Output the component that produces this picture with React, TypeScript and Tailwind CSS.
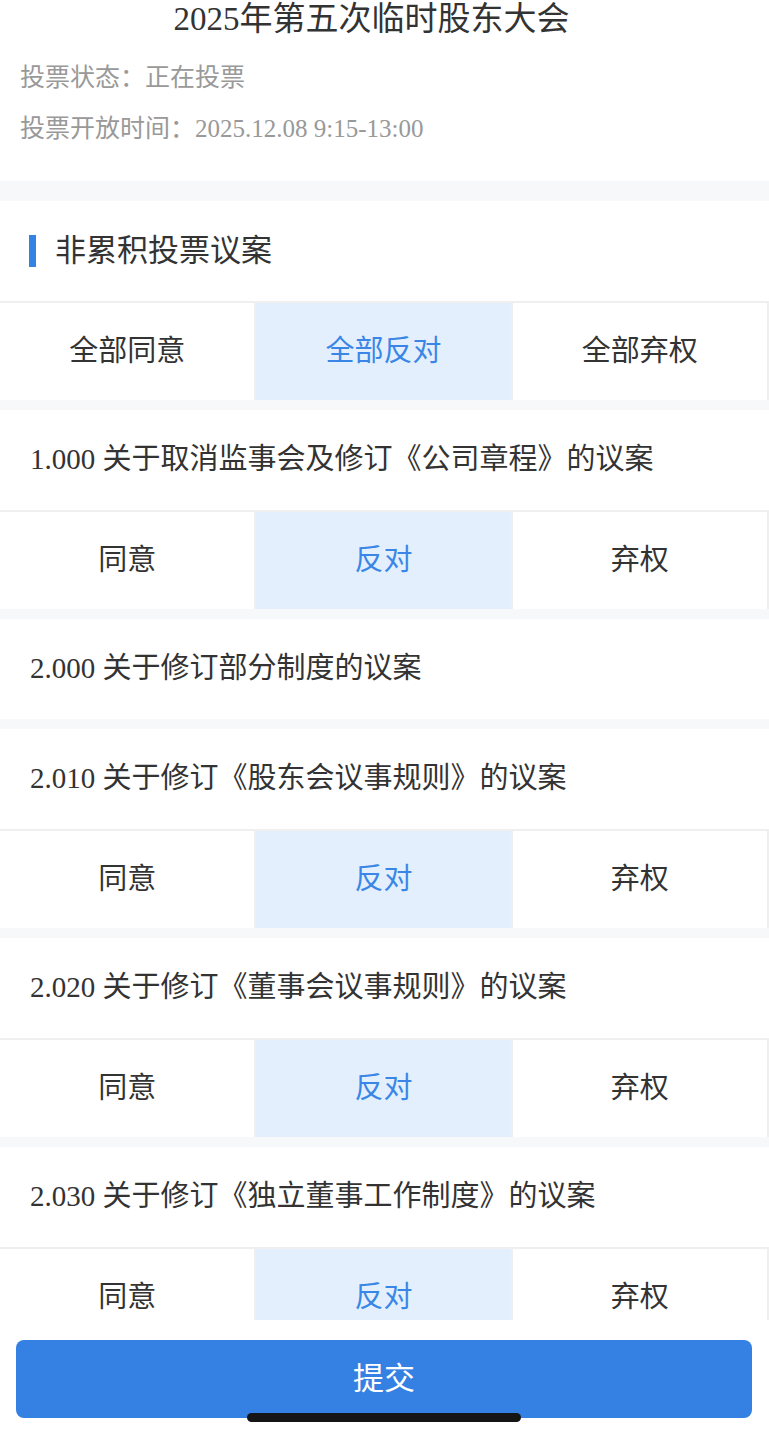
import React, { useState } from 'react';

type Choice = 'agree' | 'against' | 'abstain';

interface Motion {
  code: string;
  title: string;
  votable: boolean;
}

const MOTIONS: Motion[] = [
  { code: '1.000', title: '关于取消监事会及修订《公司章程》的议案', votable: true },
  { code: '2.000', title: '关于修订部分制度的议案', votable: false },
  { code: '2.010', title: '关于修订《股东会议事规则》的议案', votable: true },
  { code: '2.020', title: '关于修订《董事会议事规则》的议案', votable: true },
  { code: '2.030', title: '关于修订《独立董事工作制度》的议案', votable: true },
];

const FONT = "font-['Liberation_Serif','Noto_Sans_CJK_SC',sans-serif]";

function ChoiceRow({
  labels,
  value,
  onChange,
}: {
  labels: [string, string, string];
  value: Choice;
  onChange: (c: Choice) => void;
}) {
  const keys: Choice[] = ['agree', 'against', 'abstain'];
  return (
    <div className="grid grid-cols-3 border-t-2 border-[#efefef] bg-white">
      {keys.map((k, i) => {
        const active = value === k;
        return (
          <button
            key={k}
            onClick={() => onChange(k)}
            className={`h-[97px] border-r-2 border-[#efefef] text-[29px] flex items-center justify-center ${
              active ? 'bg-[#e3effd] text-[#3a86e6]' : 'bg-white text-[#333]'
            }`}
          >
            {labels[i]}
          </button>
        );
      })}
    </div>
  );
}

export default function App() {
  const [votes, setVotes] = useState<Record<string, Choice>>(() => {
    const v: Record<string, Choice> = {};
    MOTIONS.forEach((m) => (v[m.code] = 'against'));
    return v;
  });

  const allValue: Choice | null = (() => {
    const vals = MOTIONS.filter((m) => m.votable).map((m) => votes[m.code]);
    return vals.every((x) => x === vals[0]) ? vals[0] : null;
  })();

  const setAll = (c: Choice) => {
    const v: Record<string, Choice> = {};
    MOTIONS.forEach((m) => (v[m.code] = c));
    setVotes(v);
  };

  return (
    <div className={`relative h-[1439px] w-full flex flex-col bg-white overflow-hidden ${FONT}`}>
      <div className="flex-1 overflow-hidden bg-[#f7f8fa]">
        {/* Meeting info */}
        <div className="bg-white pb-[34px]">
          <h1 className="h-[40px] flex items-center justify-center pr-[26px] text-[33px] text-[#333]">
            2025年第五次临时股东大会
          </h1>
          <p className="mt-[20px] h-[36px] flex items-center px-[20px] text-[25px] text-[#999]">
            投票状态：正在投票
          </p>
          <p className="mt-[15px] h-[36px] flex items-center px-[20px] text-[25px] text-[#999]">
            投票开放时间：2025.12.08 9:15-13:00
          </p>
        </div>

        {/* Section header */}
        <div className="mt-[20px] bg-white h-[100px] flex items-center px-[29px] gap-[19px]">
          <span className="w-[7px] h-[32px] bg-[#3482e4]" />
          <span className="text-[31px] text-[#333]">非累积投票议案</span>
        </div>

        <ChoiceRow
          labels={['全部同意', '全部反对', '全部弃权']}
          value={allValue ?? 'against'}
          onChange={setAll}
        />

        {MOTIONS.map((m) => (
          <div key={m.code} className="mt-[10px]">
            <div className="h-[100px] bg-white flex items-center px-[30px] text-[29px] text-[#333]">
              {m.code} {m.title}
            </div>
            {m.votable && (
              <ChoiceRow
                labels={['同意', '反对', '弃权']}
                value={votes[m.code]}
                onChange={(c) => setVotes({ ...votes, [m.code]: c })}
              />
            )}
          </div>
        ))}
      </div>

      {/* Footer */}
      <div className="h-[119px] shrink-0 bg-white pt-[20px] pl-[16px] pr-[17px]">
        <button className="w-full h-[78px] rounded-[8px] bg-[#3481e3] text-white text-[31px] flex items-center justify-center">
          提交
        </button>
      </div>

      {/* Home indicator */}
      <div className="absolute left-[247px] bottom-[17px] w-[274px] h-[9px] rounded-full bg-[#151515]" />
    </div>
  );
}
